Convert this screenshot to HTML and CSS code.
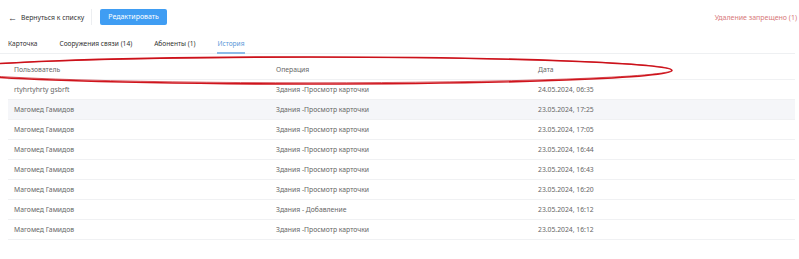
FILE: index.html
```html
<!DOCTYPE html>
<html lang="ru">
<head>
<meta charset="utf-8">
<link rel="stylesheet" href="styles.css">
</head>
<body>
<div class="page">
  <div class="topbar">
    <div class="left">
      <a class="back"><span class="arrow">&#8592;</span>Вернуться к списку</a>
      <span class="sep"></span>
      <button class="btn">Редактировать</button>
    </div>
    <div class="denied">Удаление запрещено (1)</div>
  </div>
  <div class="tabs">
    <div class="tab">Карточка</div>
    <div class="tab">Сооружения связи (14)</div>
    <div class="tab">Абоненты (1)</div>
    <div class="tab active">История</div>
  </div>
  <div class="table">
    <div class="row head"><div>Пользователь</div><div>Операция</div><div>Дата</div></div>
    <div class="row"><div>rtyhrtyhrty gsbrft</div><div>Здания -Просмотр карточки</div><div>24.05.2024, 06:35</div></div>
    <div class="row alt"><div>Магомед Гамидов</div><div>Здания -Просмотр карточки</div><div>23.05.2024, 17:25</div></div>
    <div class="row"><div>Магомед Гамидов</div><div>Здания -Просмотр карточки</div><div>23.05.2024, 17:05</div></div>
    <div class="row"><div>Магомед Гамидов</div><div>Здания -Просмотр карточки</div><div>23.05.2024, 16:44</div></div>
    <div class="row"><div>Магомед Гамидов</div><div>Здания -Просмотр карточки</div><div>23.05.2024, 16:43</div></div>
    <div class="row"><div>Магомед Гамидов</div><div>Здания -Просмотр карточки</div><div>23.05.2024, 16:20</div></div>
    <div class="row"><div>Магомед Гамидов</div><div>Здания - Добавление</div><div>23.05.2024, 16:12</div></div>
    <div class="row"><div>Магомед Гамидов</div><div>Здания -Просмотр карточки</div><div>23.05.2024, 16:12</div></div>
  </div>
</div>
<svg class="mark" width="799" height="259" viewBox="0 0 799 259">
  <ellipse cx="310" cy="70.5" rx="362" ry="13.5" fill="none" stroke="#d0141c" stroke-width="1.6"/>
  <ellipse cx="311" cy="70" rx="361" ry="12.8" fill="none" stroke="#c8101a" stroke-width="1" opacity="0.7"/>
</svg>
</body>
</html>
```

FILE: styles.css
```css
* { box-sizing: border-box; }
html, body { margin: 0; padding: 0; background: #fff; }
body {
  font-family: "Noto Sans", "Open Sans", sans-serif;
  font-size: 7px;
  color: #666;
  width: 799px;
  height: 259px;
  overflow: hidden;
  position: relative;
}
.page { padding: 0 2px 0 0; }
.topbar {
  display: flex;
  justify-content: space-between;
  align-items: center;
  height: 34px;
  padding-left: 8px;
}
.left { display: flex; align-items: center; }
.back { display: flex; align-items: center; color: #333; font-size: 6.8px; }
.arrow { font-size: 9px; margin-right: 4px; color: #444; }
.sep { width: 1px; height: 16px; background: #eceef1; margin: 0 8px 0 7px; }
.btn {
  font-family: inherit;
  font-size: 7px;
  color: #fff;
  background: #3f9df3;
  border: none;
  border-radius: 2px;
  height: 16px;
  padding: 0 8px;
  line-height: 16px;
}
.denied { color: #d87a7a; }
.tabs {
  display: flex;
  gap: 22px;
  padding-left: 8px;
  height: 20px;
  border-bottom: 1px solid #eef0f2;
  margin-right: 2px;
  font-size: 6.6px;
}
.tab {
  color: #333;
  line-height: 20px;
  height: 20px;
  position: relative;
}
.tab.active { color: #5a98d8; }
.tab.active::after {
  content: "";
  position: absolute;
  left: 0; right: 0; bottom: 0;
  height: 2px;
  background: #8cbbe8;
}
.table { margin: 6px 2px 0 8px; }
.row {
  display: grid;
  grid-template-columns: 262px 262px 1fr;
  height: 20px;
  align-items: center;
  border-bottom: 1px solid #f0f1f3;
  color: #666;
  font-size: 6.8px;
}
.row > div { padding-left: 6px; }
.row.alt { background: #f5f6f9; }
.mark { position: absolute; left: 0; top: 0; pointer-events: none; }
```
